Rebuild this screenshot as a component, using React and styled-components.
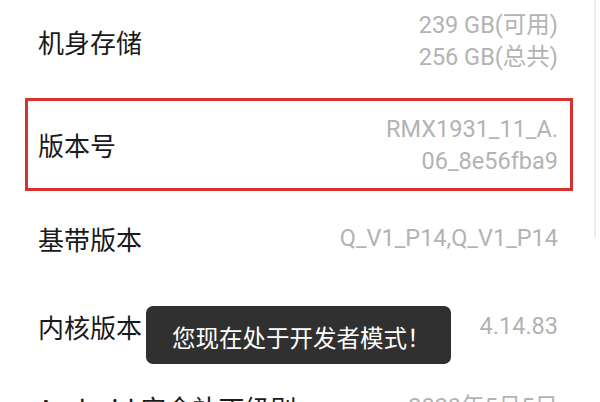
import React from 'react'
import styled, { createGlobalStyle } from 'styled-components'

const Global = createGlobalStyle`
  html, body { margin: 0; padding: 0; background: #fff; }
  body { font-family: Roboto, "Noto Sans CJK SC", sans-serif; }
`

const Screen = styled.div`
  position: relative;
  width: 600px;
  height: 402px;
  overflow: hidden;
  background: #fff;
`

const List = styled.div`
  display: flex;
  flex-direction: column;
  padding-left: 25px;
  width: 548px;
`

const Row = styled.div`
  display: flex;
  align-items: center;
  justify-content: space-between;
  box-sizing: border-box;
  height: ${p => p.$h}px;
  margin-top: ${p => p.$mt || 0}px;
  padding: 0 15px 0 13px;
  border: ${p => (p.$marked ? '3px solid #d8322f' : 'none')};
  ${p => p.$marked && 'padding-left: 10px; padding-right: 12px;'}
`

const Label = styled.div`
  font-family: "Noto Sans CJK SC", Roboto, sans-serif;
  font-size: 26px;
  color: #1a1a1a;
  white-space: nowrap;
`

const Value = styled.div`
  font-size: 23.5px;
  line-height: 32px;
  color: #b3b3b3;
  text-align: right;
  white-space: nowrap;
`

const Scrollbar = styled.div`
  position: absolute;
  left: 594px;
  top: 0;
  width: 2px;
  height: 237px;
  background: #ececec;
`

const Toast = styled.div`
  position: absolute;
  left: 146px;
  top: 306px;
  width: 305px;
  height: 58px;
  box-sizing: border-box;
  padding: 3px 0 0 26px;
  display: flex;
  align-items: center;
  background: #303030;
  border-radius: 7px;
  color: #fff;
  font-family: "Noto Sans CJK SC", sans-serif;
  font-size: 23.5px;
`

const rows = [
  { label: '机身存储', value: ['239 GB(可用)', '256 GB(总共)'], h: 82 },
  { label: '版本号', value: ['RMX1931_11_A.', '06_8e56fba9'], h: 93, mt: 16, marked: true },
  { label: '基带版本', value: ['Q_V1_P14,Q_V1_P14'], h: 86, mt: 4 },
  { label: '内核版本', value: ['4.14.83'], h: 90 },
  { label: 'Android 安全补丁级别', value: ['2020年5月5日'], h: 72 },
]

const App = () => {
  return (
    <Screen>
      <Global />
      <List>
        {rows.map(r => (
          <Row key={r.label} $h={r.h} $mt={r.mt} $marked={r.marked}>
            <Label>{r.label}</Label>
            <Value>
              {r.value.map(v => <div key={v}>{v}</div>)}
            </Value>
          </Row>
        ))}
      </List>
      <Scrollbar />
      <Toast>您现在处于开发者模式！</Toast>
    </Screen>
  )
}

export default App
